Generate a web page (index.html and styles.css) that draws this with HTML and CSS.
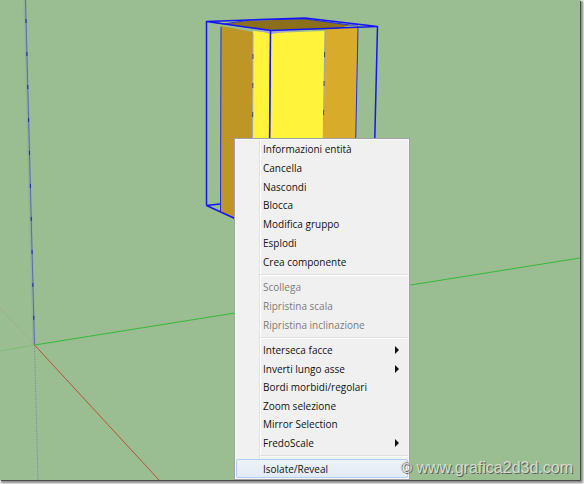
FILE: index.html
```html
<!DOCTYPE html>
<html lang="it">
<head>
<meta charset="utf-8">
<title>Menu contestuale del gruppo</title>
<link rel="stylesheet" href="styles.css">
</head>
<body>
<main class="viewport">
  <svg class="scene" viewBox="0 0 580 480" preserveAspectRatio="xMinYMin slice" aria-hidden="true">
    <g class="axes">
      <path class="axis-blue-halo" d="M25 0L34 345"/>
      <path class="axis-blue" d="M25.500 0L34.500 345"/>
      <path class="axis-blue-dash" d="M25.500 0L34.500 345"/>
      <path class="axis-blue-back" d="M34.500 345L38 480"/>
      <path class="axis-green-back" d="M0 351L34.500 345"/>
      <path class="axis-red-back" d="M0 308L34.500 345"/>
      <path class="axis-green" d="M34.500 345L580 258"/>
      <path class="axis-red" d="M34.500 345L159 480"/>
    </g>
    <path fill="#bd9626" d="M221 26L253 32L252 226L220 211Z"/>
    <path fill="#fff33b" d="M253 31L271 33L325 31L323 226H252Z"/>
    <path fill="#d9ab2a" d="M325 30L357 27L355 226H323Z"/>
    <path fill="#8c6f1b" d="M224 24L246 21L305 19L350 25L337 29L271 31L250 28Z"/>
    <path fill="#a7a8ce" d="M252 29L271 34L298 30L270 30Z"/>
    <path class="soft-edges" d="M253 33L252.500 150M325 31L323 150"/>
    <path class="soft-dash" d="M253 33L252.500 150M325 31L323 150"/>
    <g class="selection-thin">
      <path d="M221 27L220.500 212M358 26L355.500 150M270.500 34L269.500 150"/>
      <path d="M212 22L224 24L250 20L305 19L350 25L358 25"/>
    </g>
    <g class="selection">
      <path d="M206.500 21.500L305 18L377.500 26.500L271 30.500Z"/>
      <path d="M206.500 21.500V205.500M377.500 26.500L374.500 150"/>
      <path d="M206.500 205.500L220 204M206.500 205.500L236 219"/>
      <path d="M270.500 31L269.500 150"/>
    </g>
  </svg>

  <div class="menu" role="menu" aria-label="Gruppo">
    <div class="group group-seven">
      <button class="item" role="menuitem">Informazioni entità</button>
      <button class="item" role="menuitem">Cancella</button>
      <button class="item" role="menuitem">Nascondi</button>
      <button class="item" role="menuitem">Blocca</button>
      <button class="item" role="menuitem">Modifica gruppo</button>
      <button class="item" role="menuitem">Esplodi</button>
      <button class="item" role="menuitem">Crea componente</button>
    </div>
    <hr class="separator">
    <div class="group group-three">
      <button class="item" role="menuitem" disabled>Scollega</button>
      <button class="item" role="menuitem" disabled>Ripristina scala</button>
      <button class="item" role="menuitem" disabled>Ripristina inclinazione</button>
    </div>
    <hr class="separator">
    <div class="group group-six">
      <button class="item submenu" role="menuitem" aria-haspopup="menu">Interseca facce</button>
      <button class="item submenu" role="menuitem" aria-haspopup="menu">Inverti lungo asse</button>
      <button class="item" role="menuitem">Bordi morbidi/regolari</button>
      <button class="item" role="menuitem">Zoom selezione</button>
      <button class="item" role="menuitem">Mirror Selection</button>
      <button class="item submenu" role="menuitem" aria-haspopup="menu">FredoScale</button>
    </div>
    <hr class="separator">
    <div class="group">
      <button class="item active" role="menuitem">Isolate/Reveal</button>
    </div>
  </div>

  <p class="watermark">© www.grafica2d3d.com</p>
</main>
</body>
</html>
```
FILE: styles.css
```css
* {
  box-sizing: border-box;
}

body {
  margin: 0;
  padding: 0 4px 4px 0;
  overflow: hidden;
  background: #f4f4f4;
  font-family: "Open Sans", "Noto Sans", sans-serif;
}

.viewport {
  position: relative;
  height: calc(100vh - 4px);
  overflow: hidden;
  background: #9abd92;
  box-shadow: 1px 1px 0 #4c4c4c, 2px 2px 2px 1px #8a8a8a;
}

.scene {
  display: block;
  width: 100%;
  height: 100%;
  fill: none;
}

.axis-blue-halo { stroke: #8fa6a0; stroke-width: 3; opacity: 0.6; }
.axis-blue { stroke: #5c6cb4; stroke-width: 1; }
.axis-blue-dash { stroke: #1c22b0; stroke-width: 1; stroke-dasharray: 4 29; stroke-dashoffset: 14; }
.axis-blue-back { stroke: #7590a4; stroke-dasharray: 1 1; }
.axis-green { stroke: #38b838; }
.axis-green-back { stroke: #7fbc78; }
.axis-red { stroke: #b8533b; }
.axis-red-back { stroke: #a8a67c; stroke-dasharray: 1 1; }

.soft-edges { stroke: #aaa0a8; stroke-width: 1; }
.soft-dash { stroke: #4a4470; stroke-width: 1; stroke-dasharray: 5 24; stroke-dashoffset: 8; }
.selection { stroke: #1414f5; stroke-width: 1.5; stroke-linejoin: round; }
.selection-thin { stroke: #2b2be0; stroke-width: 1; }

.menu {
  position: absolute;
  left: 234px;
  top: 138px;
  width: 176px;
  padding: 1px;
  border: 1px solid #a3a3a3;
  background: linear-gradient(90deg, #f1f1f1 24px, #e2e3e3 24px, #e2e3e3 25px, #fff 25px, #fff 26px, #f0f0f0 26px);
  box-shadow: inset 0 0 0 1px #f7f7f7;
}

.group {
  display: grid;
  grid-auto-rows: 1fr;
}

.group-seven { height: 131px; }
.group-three { height: 56px; }
.group-six { height: 111px; }

.item {
  display: flex;
  align-items: center;
  justify-content: space-between;
  min-height: 18px;
  margin: 0;
  padding: 0 9px 0 27px;
  border: 0;
  background: none;
  color: #111;
  font: inherit;
  font-size: 10px;
  line-height: 18px;
  text-align: left;
}

.item:disabled {
  color: #7c7c7c;
}

.submenu::after {
  content: "";
  border-left: 4px solid #111;
  border-top: 4px solid transparent;
  border-bottom: 4px solid transparent;
}

.active {
  height: 19px;
  border: 1px solid #aecff7;
  border-radius: 2px;
  padding-left: 26px;
  background: linear-gradient(#eef2f8, #e3ebf5);
  line-height: 16px;
}

.separator {
  height: 2px;
  margin: 3px 0 2px 24px;
  border: 0;
  border-top: 1px solid #e0e0e0;
  background: #fff;
}

.watermark {
  position: absolute;
  right: 7px;
  bottom: 2px;
  margin: 0;
  color: #d5dccf;
  font-family: "Liberation Sans", sans-serif;
  font-size: 16px;
  line-height: 20px;
  text-shadow: 1px 1px 0 #5c6259;
}
```
